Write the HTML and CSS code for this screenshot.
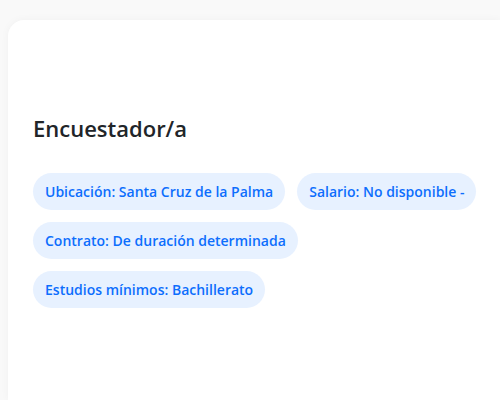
FILE: index.html
```html
<!DOCTYPE html>
<html lang="es">
<head>
    <meta charset="UTF-8">
    <meta name="viewport" content="width=device-width, initial-scale=1.0">
    <title>Encuestador/a</title>
    <link rel="stylesheet" href="styles.css">
</head>
<body>
<div class="card">
    <div class="card-top"></div>
    <h2 class="job-title">Encuestador/a</h2>
    <div class="tags">
        <span class="tag">Ubicación: Santa Cruz de la Palma</span>
        <span class="tag">Salario: No disponible -</span>
        <span class="tag">Contrato: De duración determinada</span>
        <span class="tag">Estudios mínimos: Bachillerato</span>
    </div>
</div>
</body>
</html>
```

FILE: styles.css
```css
html, body {
    height: 100%;
}
body {
    margin: 0;
    padding: 20px 0 0 8px;
    box-sizing: border-box;
    background-color: #f9f9f9;
    font-family: 'Open Sans', 'Noto Sans', sans-serif;
    color: #212529;
    overflow: hidden;
}
.card {
    height: 100%;
    padding: 0 25px;
    background-color: #fff;
    border-radius: 16px 0 0 0;
    box-shadow: 0 0 8px rgba(0, 0, 0, 0.04);
}
.card-top {
    height: 92px;
}
.job-title {
    margin: 0 0 29px;
    font-size: 22px;
    font-weight: 600;
    line-height: 32px;
}
.tags {
    width: 460px;
    display: flex;
    flex-wrap: wrap;
    gap: 12px;
}
.tag {
    padding: 8px 12px;
    font-size: 14px;
    font-weight: 600;
    line-height: 21px;
    color: #0d6efd;
    background-color: #e7f1ff;
    border-radius: 20px;
}
```
